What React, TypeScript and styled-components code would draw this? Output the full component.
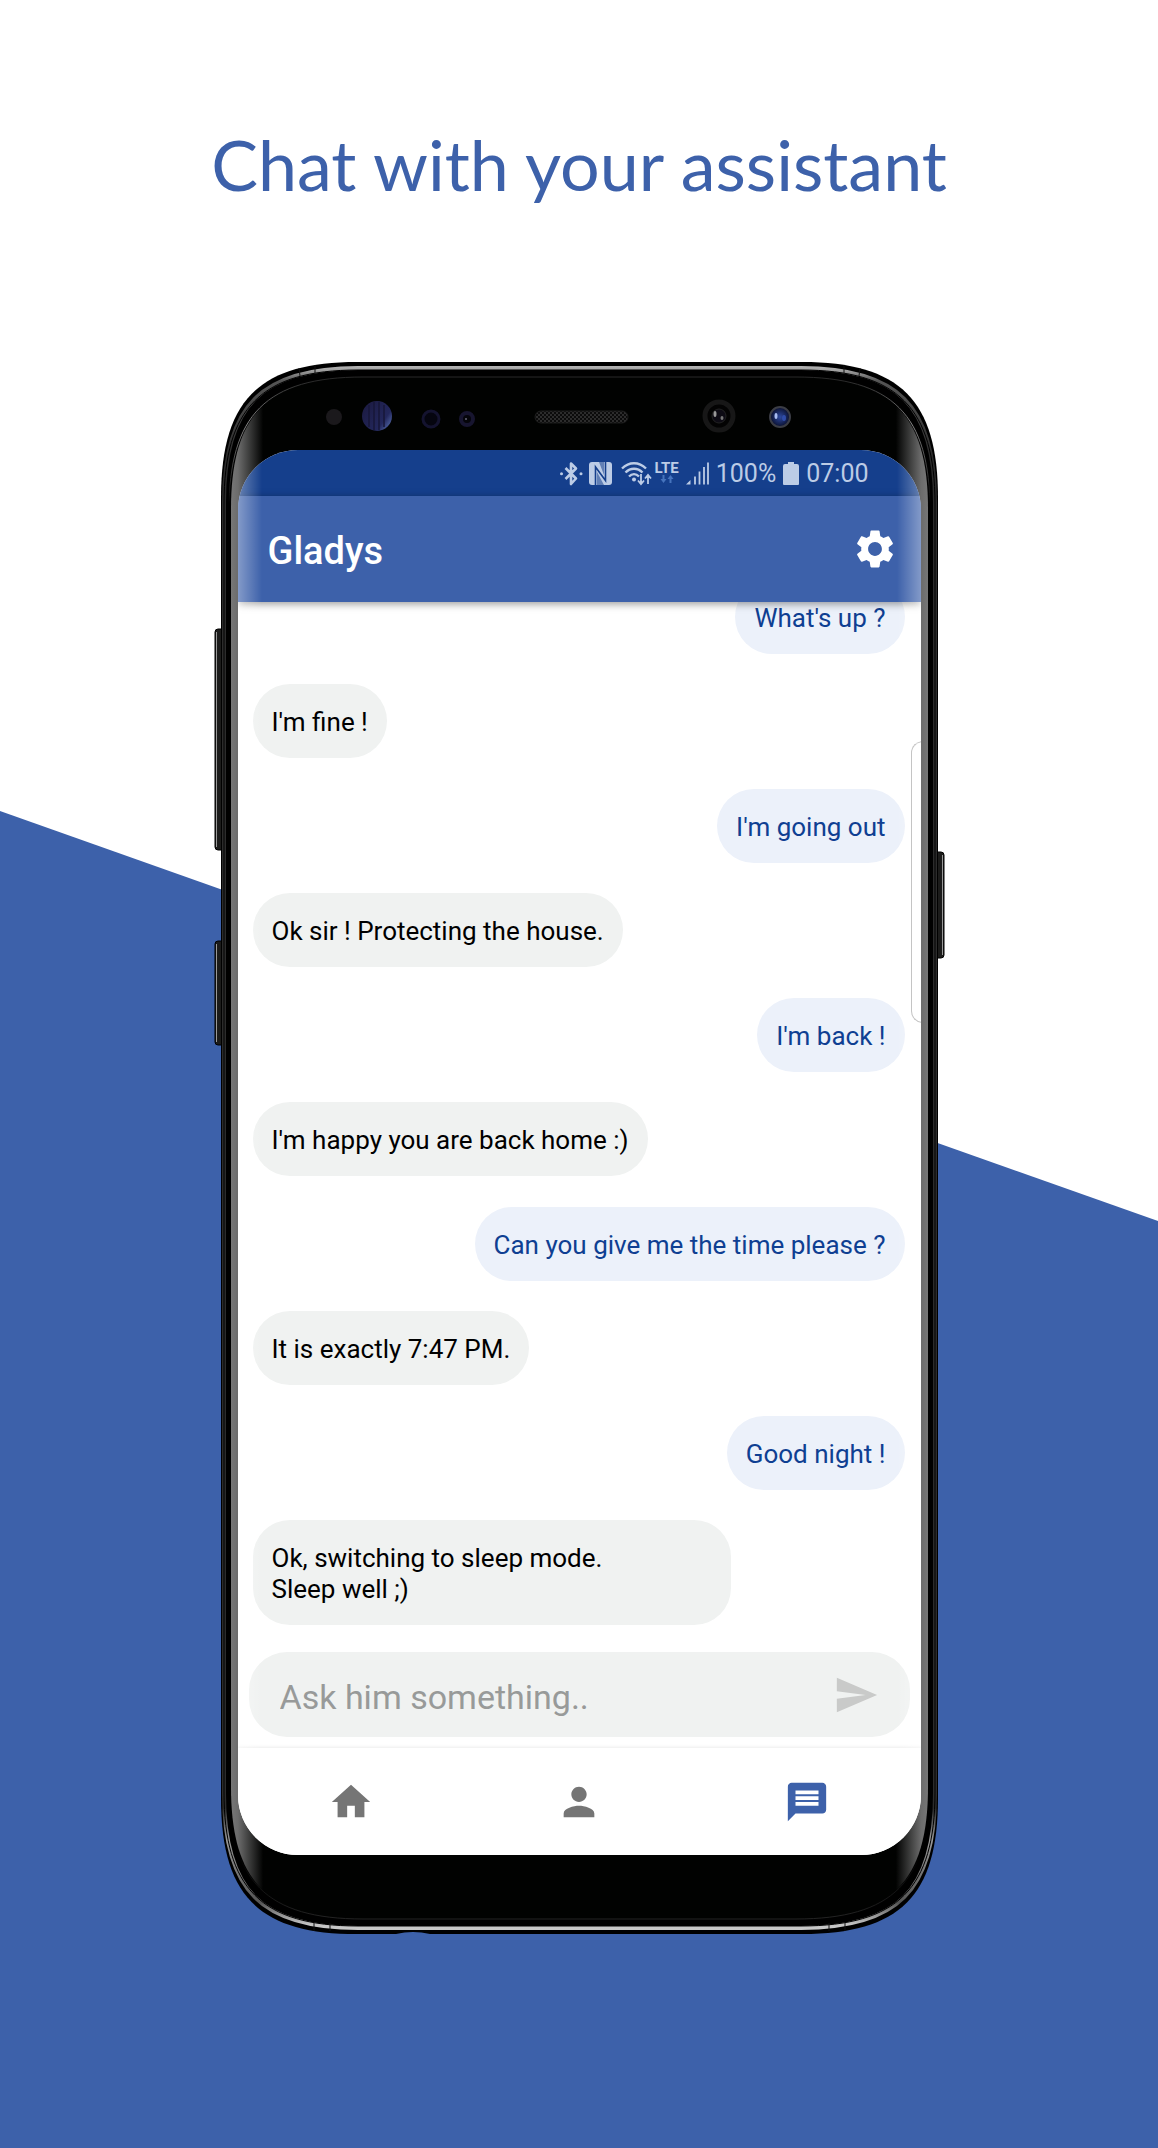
import React from 'react';
import styled, { createGlobalStyle } from 'styled-components';
import { MdSettings, MdSend, MdHome, MdPerson, MdMessage } from 'react-icons/md';

const Global = createGlobalStyle`
  * { box-sizing: border-box; }
  body { margin: 0; background: #fff; font-family: Roboto, "Liberation Sans", sans-serif; }
`;

const Poster = styled.main`
  position: relative;
  display: flex;
  flex-direction: column;
  align-items: center;
  padding: 114px 24px 214px;
  overflow: hidden;
  background: #fff;
  &::before {
    content: '';
    position: absolute;
    inset: 811px 0 0;
    background: #3d61aa;
    clip-path: polygon(0 0, 100% 410px, 100% 100%, 0 100%);
  }
`;

const Headline = styled.h1`
  margin: 0 0 148px;
  color: #3d61aa;
  font: 400 70px/100px Lato, "Noto Sans", sans-serif;
  text-align: center;
`;

const Phone = styled.section`
  position: relative;
  width: 100%;
  max-width: 717px;
  padding: 0 17px 79px;
`;

const FrameArt = styled.svg`
  position: absolute;
  top: 0;
  left: -7px;
  width: calc(100% + 14px);
  height: 100%;
`;

const SensorArt = styled.svg`
  position: relative;
  display: block;
  width: 100%;
  height: 88px;
`;

const Screen = styled.div`
  position: relative;
  display: flex;
  flex-direction: column;
  border-radius: 60px;
  background: #fff;
  overflow: hidden;
`;

const StatusBar = styled.div`
  display: flex;
  align-items: center;
  justify-content: flex-end;
  gap: 7px;
  height: 46px;
  padding: 2px 52px 0 0;
  background: #153f8c;
  color: #bccce6;
  font-size: 25px;
  line-height: 32px;
`;

const StatusArt = styled.svg<{ $width: number }>`
  flex: none;
  width: ${(p) => p.$width}px;
  height: 26px;
`;

const Network = styled.div`
  display: flex;
  flex-direction: column;
  align-items: center;
  height: 26px;
  margin-left: -4px;
  font-size: 15px;
  font-weight: 700;
  line-height: 14px;
`;

const DataArt = styled.svg`
  width: 14px;
  height: 9px;
`;

const AppBar = styled.header`
  position: relative;
  z-index: 1;
  display: flex;
  align-items: center;
  justify-content: space-between;
  height: 106px;
  padding: 0 23px 0 30px;
  background: #3d61aa;
  color: #fff;
  box-shadow: 0 2px 8px rgba(0, 0, 0, 0.4);
`;

const AppTitle = styled.h2`
  margin: 0;
  padding-top: 3px;
  font-size: 38px;
  font-weight: 500;
  line-height: 44px;
`;

const IconButton = styled.button<{ $tone: string }>`
  display: flex;
  align-items: center;
  justify-content: center;
  padding: 0;
  border: 0;
  background: none;
  color: ${(p) => p.$tone};
  cursor: pointer;
`;

const Thread = styled.ol`
  display: flex;
  flex-direction: column;
  margin: -53px 0 0;
  padding: 0 16px 27px 15px;
  list-style: none;
`;

const Bubble = styled.li<{ $mine?: boolean; $wide?: boolean }>`
  align-self: ${(p) => (p.$mine ? 'flex-end' : 'flex-start')};
  width: ${(p) => (p.$wide ? '100%' : 'auto')};
  max-width: 478px;
  margin-top: ${(p) => (p.$mine ? 31 : 30)}px;
  padding: 23px 19px 20px;
  border-radius: 37px;
  background: ${(p) => (p.$mine ? '#ecf1fa' : '#f0f2f1')};
  color: ${(p) => (p.$mine ? '#0f3f92' : '#000')};
  font-size: 26px;
  line-height: 31px;
  white-space: pre-line;
`;

const Composer = styled.form`
  display: flex;
  align-items: center;
  height: 85px;
  margin: 0 11px 11px;
  padding: 0 31px 0 31px;
  border-radius: 38px;
  background: #f0f2f1;
`;

const MessageInput = styled.input`
  flex: 1;
  min-width: 0;
  padding: 4px 0 0;
  border: 0;
  outline: 0;
  background: none;
  color: #000;
  font: 400 34px/42px Roboto, "Liberation Sans", sans-serif;
  &::placeholder { color: #989a99; opacity: 1; }
`;

const TabBar = styled.nav`
  display: grid;
  grid-template-columns: repeat(3, 1fr);
  height: 107px;
  background: #fff;
  box-shadow: 0 -1px 3px rgba(0, 0, 0, 0.08);
`;

const EdgeGlow = styled.div`
  position: absolute;
  z-index: 2;
  inset: 0;
  pointer-events: none;
  background:
    linear-gradient(90deg, rgba(255,255,255,.36), rgba(255,255,255,0) 24px),
    linear-gradient(270deg, rgba(255,255,255,.36), rgba(255,255,255,0) 24px);
`;

const EdgeHandle = styled.div`
  position: absolute;
  z-index: 3;
  top: 291px;
  right: -2px;
  width: 12px;
  height: 282px;
  border: 1px solid #c4c4c4;
  border-right: 0;
  border-radius: 12px 0 0 12px;
`;

const messages = [
  { text: "What's up ?", mine: true },
  { text: "I'm fine !" },
  { text: "I'm going out", mine: true },
  { text: 'Ok sir ! Protecting the house.' },
  { text: "I'm back !", mine: true },
  { text: "I'm happy you are back home :)" },
  { text: 'Can you give me the time please ?', mine: true },
  { text: 'It is exactly 7:47 PM.' },
  { text: 'Good night !', mine: true },
  { text: 'Ok, switching to sleep mode.\nSleep well ;)', wide: true },
];

/* Rounded body outline, inset from the 717x1572 case that starts at x=7. */
const outline = (ix: number, iy: number, r: number) => {
  const l = 7 + ix, t = iy, R = 724 - ix, b = 1572 - iy, k = r * 0.28;
  return `M${l + r} ${t}H${R - r}C${R - k} ${t} ${R} ${t + k} ${R} ${t + r}V${b - r}C${R} ${b - k} ${R - k} ${b} ${R - r} ${b}H${l + r}C${l + k} ${b} ${l} ${b - k} ${l} ${b - r}V${t + r}C${l} ${t + k} ${l + k} ${t} ${l + r} ${t}Z`;
};

function Frame() {
  return (
    <FrameArt viewBox="0 0 731 1572" preserveAspectRatio="none" aria-hidden="true">
      <defs>
        <linearGradient id="side" x1="17" x2="714" y1="0" y2="0" gradientUnits="userSpaceOnUse">
          <stop offset="0" stopColor="#777" />
          <stop offset="0.01" stopColor="#6c6c6c" />
          <stop offset="0.046" stopColor="#010201" />
          <stop offset="0.954" stopColor="#010201" />
          <stop offset="0.99" stopColor="#6c6c6c" />
          <stop offset="1" stopColor="#777" />
        </linearGradient>
        <linearGradient id="rim" x1="0" x2="0" y1="0" y2="1572" gradientUnits="userSpaceOnUse">
          <stop offset="0" stopColor="#c4c4c4" />
          <stop offset="0.005" stopColor="#a4a4a4" />
          <stop offset="0.012" stopColor="#555" />
          <stop offset="0.06" stopColor="#2c2c2c" />
          <stop offset="0.92" stopColor="#2c2c2c" />
          <stop offset="0.94" stopColor="#999" />
          <stop offset="0.98" stopColor="#555" />
          <stop offset="0.994" stopColor="#c4c4c4" />
          <stop offset="1" stopColor="#ccc" />
        </linearGradient>
        <linearGradient id="inner" x1="0" x2="0" y1="0" y2="1572" gradientUnits="userSpaceOnUse">
          <stop offset="0" stopColor="#222" />
          <stop offset="0.012" stopColor="#2a2a2a" />
          <stop offset="0.04" stopColor="#8a8a8a" />
          <stop offset="0.09" stopColor="#000" />
          <stop offset="0.95" stopColor="#000" />
          <stop offset="1" stopColor="#2c2c2c" />
        </linearGradient>
      </defs>
      <g fill="#1c1c1b" stroke="#000" strokeWidth="1">
        <rect x="1" y="267" width="12" height="221" rx="3" />
        <rect x="1" y="579" width="12" height="104" rx="3" />
        <rect x="718" y="490" width="12" height="106" rx="3" />
      </g>
      <path d="M2.500 270V485M2.500 582V680M728.500 493V593" stroke="#999" strokeWidth="1" />
      <path d={outline(0, 0, 136)} fill="#000" />
      <path d={outline(3, 6, 134)} fill="none" stroke="url(#rim)" strokeWidth="4" />
      <path d={outline(3, 8, 134)} fill="none" stroke="#000" strokeWidth="1" />
      <path d={outline(10, 15, 132)} fill="url(#side)" />
      <path d={outline(8, 15, 134)} fill="none" stroke="url(#inner)" strokeWidth="1" />
      <path d="M85 6l1 8M101 3v8M646 6l-1 8M630 3v8M100 1561v8M116 1561v8M631 1561v8M615 1561v8" stroke="#111" strokeWidth="1" />
      <path d="M182 1572q17 -4 34 0Z" fill="#3d61aa" />
    </FrameArt>
  );
}

function Sensors() {
  return (
    <SensorArt viewBox="0 0 683 88" aria-hidden="true">
      <defs>
        <linearGradient id="iris" x1="0" x2="1" y1="0.200" y2="0.900">
          <stop offset="0" stopColor="#1c1b42" />
          <stop offset="0.7" stopColor="#23275c" />
          <stop offset="1" stopColor="#5a74b4" />
        </linearGradient>
        <radialGradient id="lens">
          <stop offset="0" stopColor="#2c489e" />
          <stop offset="1" stopColor="#0a0f2c" />
        </radialGradient>
        <pattern id="mesh" width="4" height="4" patternUnits="userSpaceOnUse">
          <rect width="4" height="4" fill="#0b0b0b" />
          <rect width="2" height="2" fill="#2c2c2c" />
          <rect x="2" y="2" width="2" height="2" fill="#2c2c2c" />
        </pattern>
      </defs>
      <circle cx="96" cy="55" r="8" fill="#1b191c" />
      <circle cx="139" cy="54" r="15" fill="url(#iris)" />
      <path d="M131 43v22M136 40v28M141 40v28M146 43v22" stroke="#171738" strokeWidth="1.500" />
      <circle cx="193" cy="57" r="8" fill="#05050f" stroke="#14132f" strokeWidth="3" />
      <circle cx="229" cy="57" r="6" fill="#05050a" stroke="#17152f" strokeWidth="4" />
      <circle cx="228" cy="57" r="1" fill="#667" />
      <rect x="297" y="49" width="93" height="12" rx="6" fill="url(#mesh)" stroke="#1c1c1c" />
      <circle cx="481" cy="54" r="14" fill="#030303" stroke="#171717" strokeWidth="5" />
      <circle cx="481" cy="54" r="7" fill="#0d0b14" stroke="#222" />
      <ellipse cx="477" cy="52" rx="1.500" ry="3" fill="#999" />
      <ellipse cx="484" cy="56" rx="1.500" ry="2" fill="#777" />
      <circle cx="542" cy="55" r="10" fill="url(#lens)" stroke="#3b3d45" strokeWidth="2" />
      <ellipse cx="538" cy="54" rx="1.500" ry="3" fill="#a9bdf2" />
      <ellipse cx="546" cy="56" rx="2" ry="3" fill="#2f4ca8" />
    </SensorArt>
  );
}

function StatusIcons() {
  return (
    <>
      <StatusArt $width={93} viewBox="0 0 93 26" aria-hidden="true">
        <path d="M6.500 7L17 17.500L12 23V2.500L17 7.500L6.500 18" fill="none" stroke="currentColor" strokeWidth="2.600" strokeLinejoin="round" />
        <circle cx="2.500" cy="12.700" r="1.500" fill="currentColor" />
        <circle cx="22" cy="12.700" r="1.500" fill="currentColor" />
        <rect x="30" y="1" width="23" height="23" rx="3" fill="currentColor" />
        <path d="M36.500 24V6L46.500 19.500V1" fill="none" stroke="#153f8c" strokeWidth="1.600" />
        <path d="M38 24v-13l7 13ZM40 1h5v13Z" fill="#153f8c" opacity=".55" />
        <g fill="none" stroke="currentColor" strokeWidth="2.400">
          <path d="M63 7.500C70 0.500 80 0.500 87 7.500" />
          <path d="M66.500 11.500C71.500 6.500 78.500 6.500 83.500 11.500" />
          <path d="M70 15.500C73 12.500 77 12.500 80 15.500" />
        </g>
        <circle cx="75" cy="18.500" r="2" fill="currentColor" />
        <path d="M82 13v9M79 19.500l3 3.500l3-3.500M89 23v-8M86 17.500l3-3.500l3 3.500" fill="none" stroke="currentColor" strokeWidth="1.800" />
      </StatusArt>
      <Network>
        LTE
        <DataArt viewBox="0 0 14 9" aria-hidden="true">
          <path d="M2.500 0h2v4h2L3.500 8L0.500 4h2ZM9.500 8h2V4h2L10.500 0L7.500 4h2Z" fill="#4674bd" />
        </DataArt>
      </Network>
      <StatusArt $width={23} viewBox="0 0 23 26" aria-hidden="true">
        <path d="M0 23.500L4.500 19V23.500Z" fill="currentColor" />
        <path d="M9 23.500V15.500M13.500 23.500V10.500M18 23.500V6M22 23.500V1.500" stroke="currentColor" strokeWidth="1.800" />
      </StatusArt>
      <span>100%</span>
      <StatusArt $width={16} viewBox="0 0 16 26" aria-hidden="true">
        <path d="M5 1h6v2h3a2 2 0 0 1 2 2v18a1 1 0 0 1-1 1H1a1 1 0 0 1-1-1V5a2 2 0 0 1 2-2h3Z" fill="currentColor" />
      </StatusArt>
      <span>07:00</span>
    </>
  );
}

export default function App() {
  return (
    <>
      <Global />
      <Poster>
        <Headline>Chat with your assistant</Headline>
        <Phone>
          <Frame />
          <Sensors />
          <Screen>
            <StatusBar><StatusIcons /></StatusBar>
            <AppBar>
              <AppTitle>Gladys</AppTitle>
              <IconButton $tone="#fff" aria-label="Settings"><MdSettings size={46} /></IconButton>
            </AppBar>
            <Thread>
              {messages.map((m) => <Bubble key={m.text} $mine={m.mine} $wide={m.wide}>{m.text}</Bubble>)}
            </Thread>
            <Composer onSubmit={(e) => e.preventDefault()}>
              <MessageInput aria-label="Message" placeholder="Ask him something.." />
              <IconButton $tone="#c9cac9" aria-label="Send"><MdSend size={46} /></IconButton>
            </Composer>
            <TabBar>
              <IconButton $tone="#757575" aria-label="Home"><MdHome size={46} /></IconButton>
              <IconButton $tone="#757575" aria-label="Profile"><MdPerson size={46} /></IconButton>
              <IconButton $tone="#3d61aa" aria-label="Chat"><MdMessage size={46} /></IconButton>
            </TabBar>
            <EdgeGlow />
            <EdgeHandle />
          </Screen>
        </Phone>
      </Poster>
    </>
  );
}
